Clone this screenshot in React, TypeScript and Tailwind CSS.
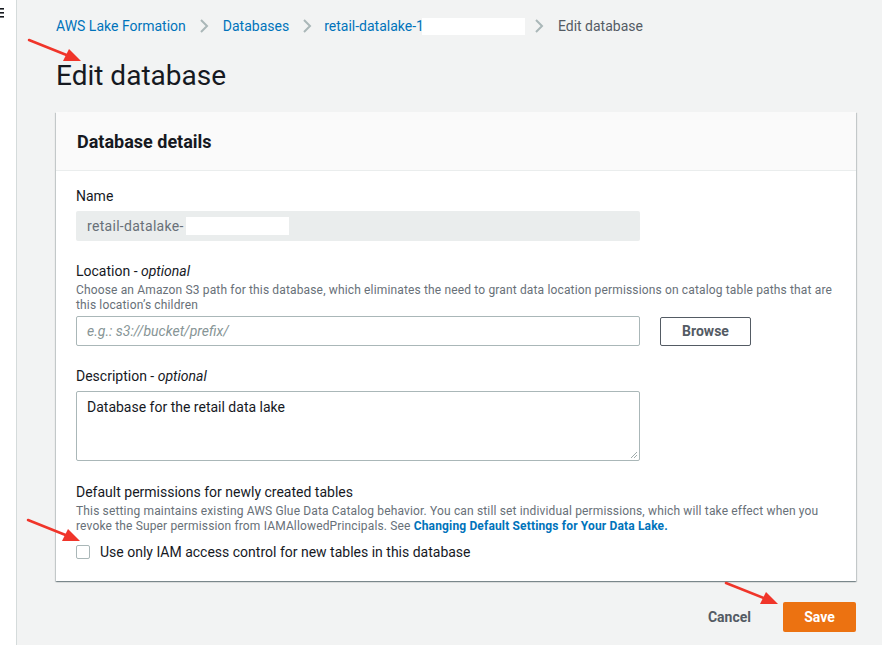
import React from 'react';

const Chevron = () => (
    <svg width="17" height="20" viewBox="0 0 17 20" className="mx-[10px] shrink-0">
        <path d="M5 4 L11 10 L5 16" fill="none" stroke="#aab7b8" strokeWidth="2" />
    </svg>
);

const Arrow = ({ className }: { className: string }) => (
    <svg width="56" height="28" viewBox="0 0 56 28" className={`absolute ${className}`}>
        <line x1="2" y1="3" x2="42" y2="19" stroke="#f0352a" strokeWidth="2.5" strokeLinecap="round" />
        <polygon points="54,24 36,24 42,12" fill="#f0352a" />
    </svg>
);

const App = () => {
    return (
        <div
            className="relative flex h-[645px] w-full overflow-hidden bg-[#f2f3f3] text-[#16191f]"
            style={{ fontFamily: 'Roboto, "Noto Sans", Arial, sans-serif' }}
        >
            {/* Collapsed side nav */}
            <div className="w-[17px] shrink-0 border-r border-[#d5dbdb] bg-white pt-[8px]">
                <svg width="6" height="10" viewBox="0 0 6 10">
                    <rect x="0" y="0" width="4" height="1.6" fill="#16191f" />
                    <rect x="0" y="4" width="4" height="1.6" fill="#16191f" />
                    <rect x="0" y="8" width="4" height="1.6" fill="#16191f" />
                </svg>
            </div>

            <main className="flex-1 px-[39px] pt-[16px]">
                {/* Breadcrumbs */}
                <nav className="flex items-center text-[14px] leading-[20px]">
                    <span className="text-[#0073bb]">AWS Lake Formation</span>
                    <Chevron />
                    <span className="text-[#0073bb]">Databases</span>
                    <Chevron />
                    <span className="-ml-[2px] flex items-center text-[#0073bb]">
                        retail-datalake-1
                        <span className="-ml-[2px] inline-block h-[17px] w-[103px] bg-white" />
                    </span>
                    <span className="-ml-[4px]">
                        <Chevron />
                    </span>
                    <span className="text-[#545b64]">Edit database</span>
                </nav>

                <h1 className="mt-[22px] text-[28px] leading-[36px] font-normal">Edit database</h1>

                {/* Panel */}
                <section className="mt-[18px] w-[800px] bg-white shadow-[0_1px_1px_0_rgba(0,28,36,0.3),1px_1px_1px_0_rgba(0,28,36,0.15),-1px_1px_1px_0_rgba(0,28,36,0.15)]">
                    <div className="flex h-[59px] items-center border-b border-[#eaeded] bg-[#fafafa] px-[21px]">
                        <h2 className="text-[18px] font-bold">Database details</h2>
                    </div>

                    <div className="px-[20px] pt-[15px] pb-[19px]">
                        {/* Name */}
                        <label className="block text-[14px] leading-[20px]">Name</label>
                        <div className="mt-[5px] flex h-[30px] w-[564px] items-center rounded-[2px] bg-[#eaeded] pl-[11px] text-[14px] tracking-[0.3px] text-[#687078]">
                            retail-datalake-
                            <span className="ml-[2px] inline-block h-[18px] w-[103px] bg-white" />
                        </div>

                        {/* Location */}
                        <label className="mt-[20px] block text-[14px] leading-[20px]">
                            Location - <i>optional</i>
                        </label>
                        <p className="mt-[2px] text-[12px] leading-[15px] tracking-[0.15px] text-[#687078]">
                            Choose an Amazon S3 path for this database, which eliminates the need to grant data location permissions on catalog table paths that are this location’s children
                        </p>
                        <div className="mt-[3px] flex items-center gap-[20px]">
                            <div className="flex h-[30px] w-[564px] items-center rounded-[2px] border border-[#aab7b8] pl-[10px] text-[14px] text-[#879596] italic">
                                e.g.: s3://bucket/prefix/
                            </div>
                            <button className="h-[29px] w-[91px] rounded-[2px] border border-[#545b64] text-[14px] font-bold text-[#545b64]">
                                Browse
                            </button>
                        </div>

                        {/* Description */}
                        <label className="mt-[20px] block text-[14px] leading-[20px]">
                            Description - <i>optional</i>
                        </label>
                        <div className="relative mt-[5px] h-[70px] w-[564px] rounded-[2px] border border-[#aab7b8] px-[10px] pt-[5px] text-[14px] leading-[20px]">
                            Database for the retail data lake
                            <svg width="8" height="8" viewBox="0 0 8 8" className="absolute right-[1px] bottom-[1px]">
                                <line x1="7" y1="1" x2="1" y2="7" stroke="#879596" strokeWidth="0.8" />
                                <line x1="7" y1="4" x2="4" y2="7" stroke="#879596" strokeWidth="0.8" />
                            </svg>
                        </div>

                        {/* Default permissions */}
                        <label className="mt-[21px] block text-[14px] leading-[20px]">
                            Default permissions for newly created tables
                        </label>
                        <p className="mt-[2px] text-[12px] leading-[15px] tracking-[0.15px] text-[#687078]">
                            This setting maintains existing AWS Glue Data Catalog behavior. You can still set individual permissions, which will take effect when you revoke the Super permission from IAMAllowedPrincipals. See{' '}
                            <a className="font-bold text-[#0073bb]">Changing Default Settings for Your Data Lake.</a>
                        </p>
                        <div className="mt-[8px] flex items-center gap-[10px] text-[14px] leading-[20px]">
                            <span className="inline-block h-[14px] w-[14px] rounded-[2px] border border-[#aab7b8] bg-white" />
                            <span>Use only IAM access control for new tables in this database</span>
                        </div>
                    </div>
                </section>

                {/* Actions */}
                <div className="mt-[21px] flex w-[800px] items-center justify-end">
                    <button className="mr-[12px] px-[20px] text-[14px] font-bold text-[#545b64]">Cancel</button>
                    <button className="h-[30px] w-[73px] rounded-[2px] bg-[#ec7211] text-[14px] font-bold text-white">
                        Save
                    </button>
                </div>
            </main>

            {/* Annotation arrows */}
            <Arrow className="top-[37px] left-[27px]" />
            <Arrow className="top-[517px] left-[26px]" />
            <Arrow className="top-[580px] left-[724px]" />
        </div>
    );
};

export default App;
